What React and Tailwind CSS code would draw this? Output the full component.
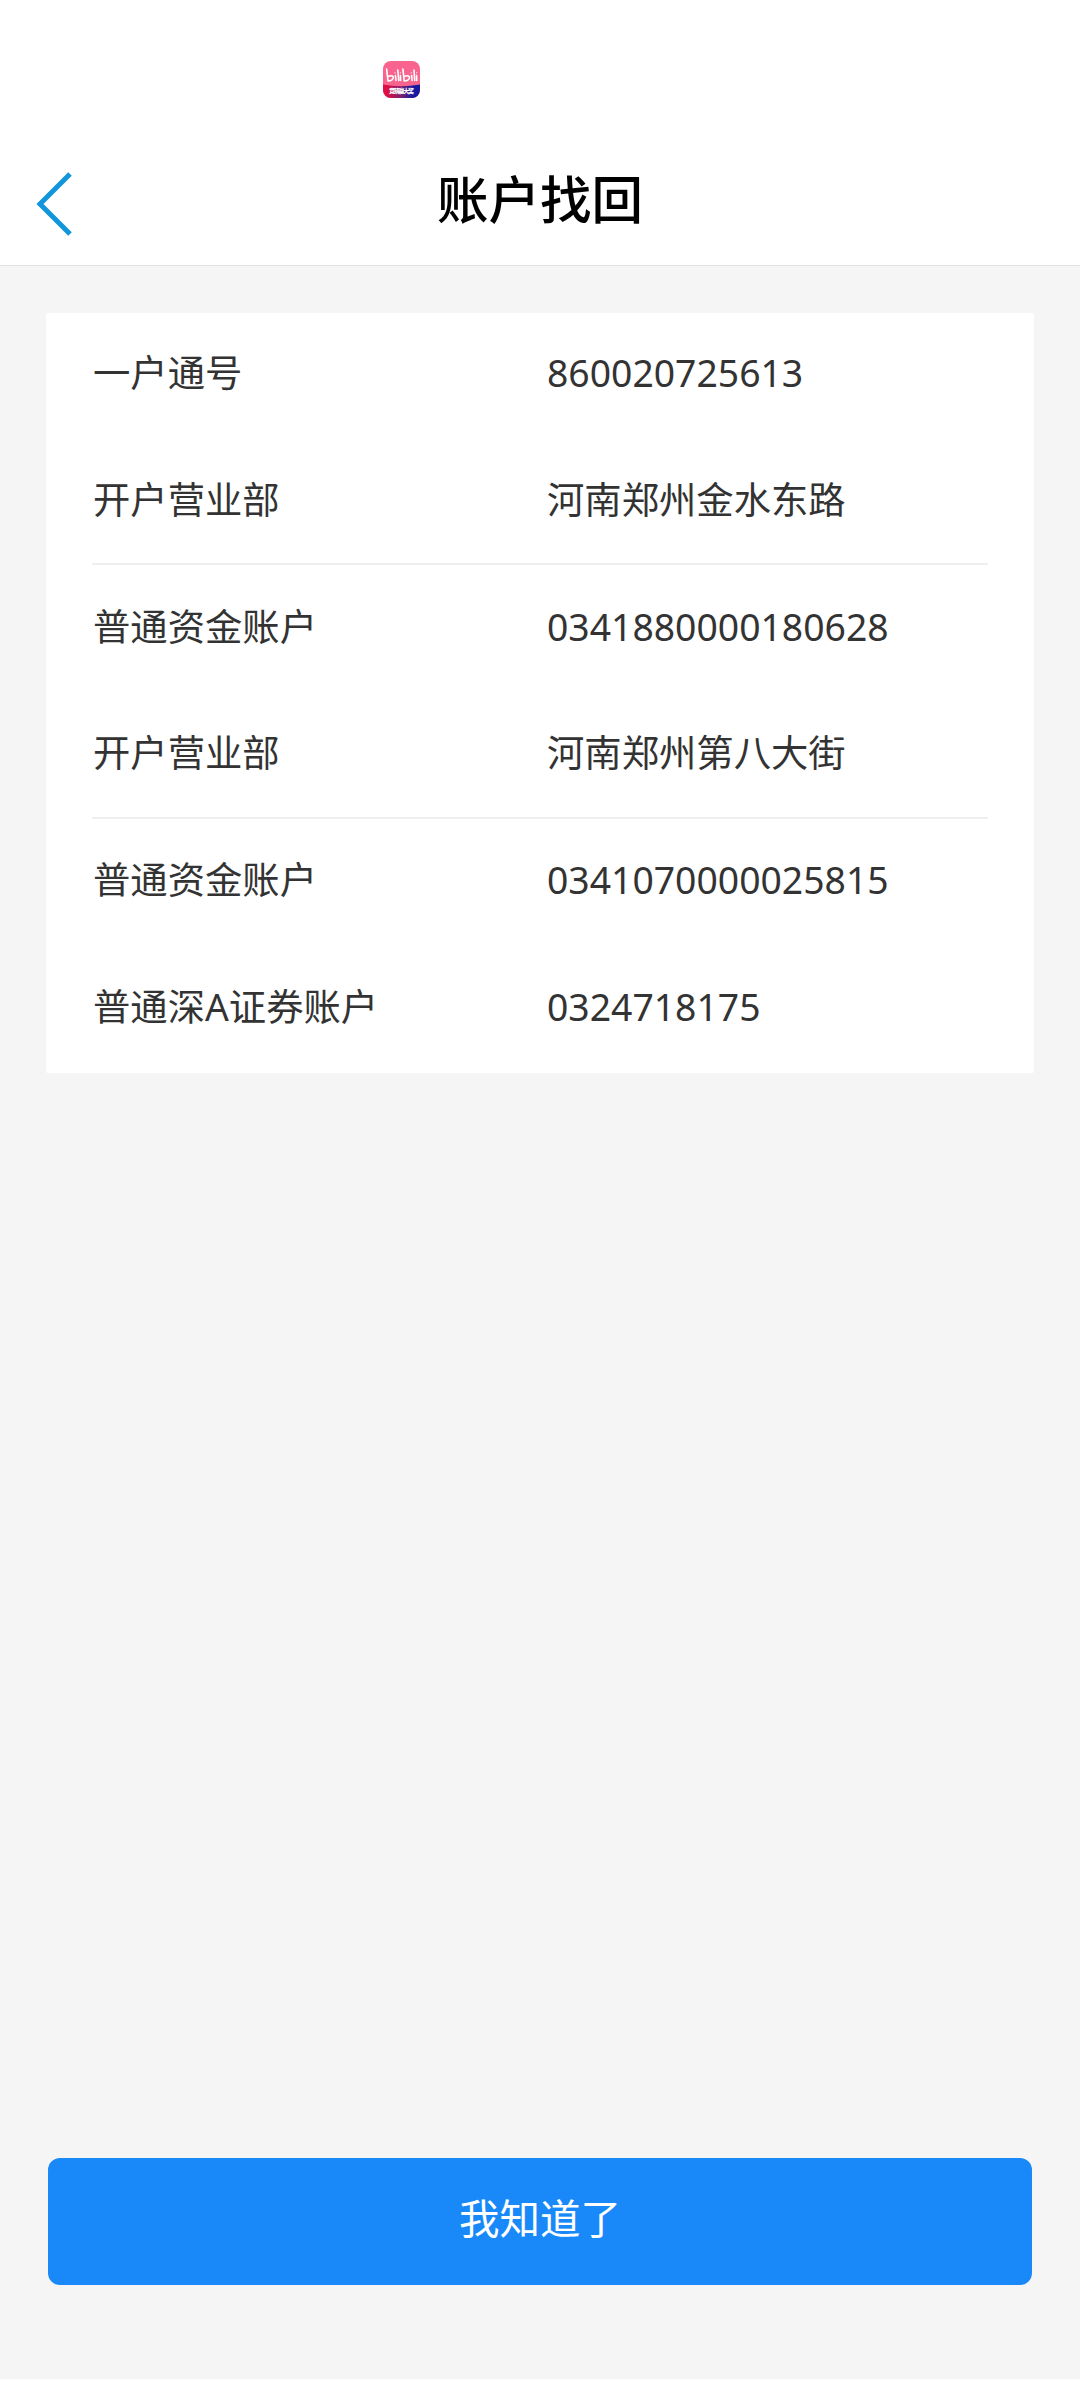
import React from 'react';

const groups = [
  [
    { label: '一户通号', value: '860020725613' },
    { label: '开户营业部', value: '河南郑州金水东路' },
  ],
  [
    { label: '普通资金账户', value: '0341880000180628' },
    { label: '开户营业部', value: '河南郑州第八大街' },
  ],
  [
    { label: '普通资金账户', value: '0341070000025815' },
    { label: '普通深A证券账户', value: '0324718175' },
  ],
];

function AppBadge() {
  return (
    <svg width="37" height="37" viewBox="0 0 37 37" role="img" aria-label="bilibili">
      <defs>
        <clipPath id="badge">
          <rect width="37" height="37" rx="8" />
        </clipPath>
        <linearGradient id="band" x1="0" x2="1">
          <stop offset="0.1" stopColor="#e00f43" />
          <stop offset="0.5" stopColor="#76206f" />
          <stop offset="0.8" stopColor="#1618a0" />
        </linearGradient>
      </defs>
      <g clipPath="url(#badge)">
        <rect width="37" height="37" fill="#f9648f" />
        <path d="M0 23.5Q18 27 37 23.5V37H0Z" fill="url(#band)" />
        {/* wordmark strokes */}
        <g fill="none" stroke="#fff" strokeWidth="1.6" strokeLinecap="round">
          <path d="M3.6 8 5 20M5 15.5C9.5 13.5 12 16 9.2 18.6 8 19.6 6.5 20 5 20" />
          <path d="M12.4 14.5 13 19.5M14.8 9 15.7 19.5M17.4 14.5 17.6 19.5" />
          <path d="M19.9 8 21.2 20M21.2 15.5C25.7 13.5 28 16 25.4 18.6 24.2 19.6 22.7 20 21.2 20" />
          <path d="M28.6 14.5 29.1 19.5M31 9 31.7 19.5M33.6 14.5 33.7 19.5" />
          <path strokeWidth="1" d="M12 11.7V12M17.3 11.7V12M28.2 11.7V12M33.6 11.7V12" />
        </g>
        <text
          x="18.5"
          y="32"
          textAnchor="middle"
          textLength="25"
          fill="#fff"
          fontSize="6"
          fontWeight="900"
          fontFamily="'Noto Sans CJK SC', sans-serif"
        >
          竞猜赢大奖
        </text>
      </g>
    </svg>
  );
}

function Row({ label, value }) {
  return (
    <div className="flex h-[126.67px] items-center pb-[6.5px] pl-px text-[37.33px] leading-none text-[#333]">
      <span className="w-[454px] shrink-0">{label}</span>
      <span>{value}</span>
    </div>
  );
}

export default function App() {
  return (
    <div className="flex h-[2400px] w-[1080px] flex-col bg-white font-['Noto_Sans','Noto_Sans_CJK_SC',sans-serif]">
      {/* Status bar */}
      <div className="flex h-[136px] shrink-0 pt-[61px] pl-[383px]">
        <AppBadge />
      </div>

      {/* Header */}
      <header className="grid h-[130px] shrink-0 grid-cols-[1fr_auto_1fr] items-center border-b border-[#e2e2e2]">
        <button className="mt-[7px] ml-[36px] w-[38px]" aria-label="返回">
          <svg width="38" height="66" viewBox="0 0 38 66" fill="none" stroke="#1296db" strokeWidth="5">
            <path d="M34 3 4 33 34 63" />
          </svg>
        </button>
        <h1 className="pb-[2px] text-[51.5px] leading-none font-medium text-black">账户找回</h1>
      </header>

      <main className="flex h-[2113px] shrink-0 flex-col justify-between bg-[#f5f5f5] px-[46px] pt-[47px] pb-[94px]">
        <section className="rounded-[2px] bg-white px-[46px]">
          {groups.map((rows, i) => (
            <div key={i} className={i > 0 ? '-mt-[3px] border-t-2 border-[#efefef] pt-px' : ''}>
              {rows.map((row) => (
                <Row key={row.label} {...row} />
              ))}
            </div>
          ))}
        </section>

        <button className="mx-[2px] h-[127px] rounded-[12px] bg-[#1989fa] pb-[5px] text-[40.5px] leading-none text-white">
          我知道了
        </button>
      </main>
    </div>
  );
}
